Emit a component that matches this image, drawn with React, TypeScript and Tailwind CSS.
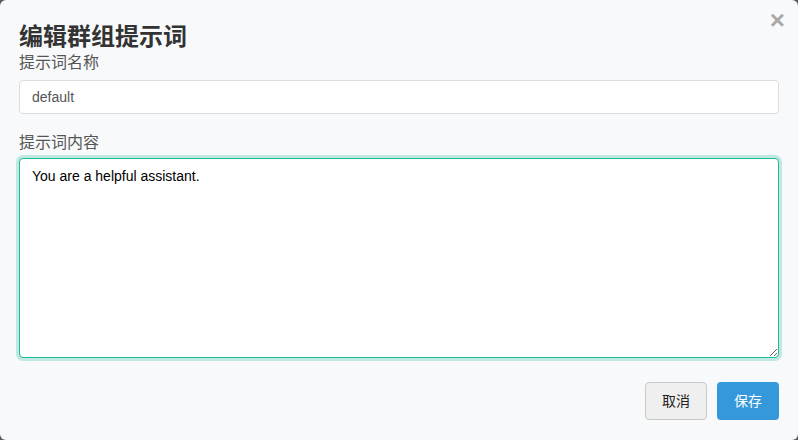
import React from 'react';

const font = { fontFamily: '"Liberation Sans", "Noto Sans CJK SC", sans-serif' };

export default function App() {
  return (
    <div className="w-[798px] h-[440px] bg-[#5a5a5a]" style={font}>
      <div className="relative w-full h-full bg-[#f8f9fa] rounded-[6px] px-[19px] pt-[22px]">
        <button className="absolute right-[13px] top-[7px] text-[#a9a9a9] text-[26px] font-bold leading-none">
          ×
        </button>
        <h2 className="text-[24px] leading-[30px] font-bold text-[#333]">编辑群组提示词</h2>
        <label className="block text-[16px] leading-[22px] text-[#555]">提示词名称</label>
        <input
          defaultValue="default"
          className="mt-[6px] block w-[760px] h-[34px] px-[12px] text-[14px] text-[#555] bg-white border border-[#ddd] rounded-[4px] outline-none"
        />
        <label className="block mt-[18px] text-[16px] leading-[22px] text-[#555]">提示词内容</label>
        <textarea
          defaultValue="You are a helpful assistant."
          className="mt-[4px] block w-[760px] h-[200px] px-[12px] pt-[7px] text-[14px] text-black bg-white border border-[#1abc9c] rounded-[4px] outline-none ring-[3px] ring-[#1abc9c]/25"
        />
        <div className="mt-[24px] flex justify-end gap-[10px]">
          <button className="w-[62px] h-[38px] text-[14px] text-[#222] bg-[#efefef] border border-[#c8c8c8] rounded-[4px]">
            取消
          </button>
          <button className="w-[62px] h-[38px] text-[14px] text-white bg-[#3498db] rounded-[4px]">
            保存
          </button>
        </div>
      </div>
    </div>
  );
}
